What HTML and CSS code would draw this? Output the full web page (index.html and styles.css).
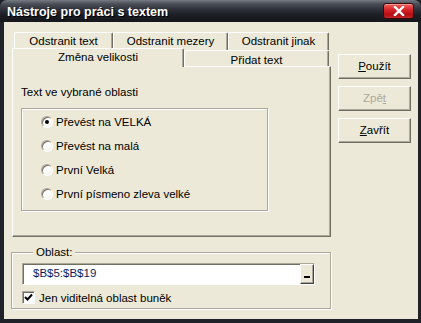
FILE: index.html
```html
<!DOCTYPE html>
<html lang="cs">
<head>
<meta charset="utf-8">
<title>Nástroje pro práci s textem</title>
<link rel="stylesheet" href="styles.css">
</head>
<body>
<div class="window">
  <div class="titlebar">
    <span class="title">Nástroje pro práci s textem</span>
    <span class="close">
      <svg width="12" height="10" viewBox="0 0 12 10"><path d="M2 1 L10 9 M10 1 L2 9" stroke="#fff" stroke-width="2.4" stroke-linecap="square" fill="none"/></svg>
    </span>
  </div>
  <div class="client">
    <div class="leftcol">
      <div class="tabctl">
        <div class="tabrow back">
          <div class="tab w1">Odstranit text</div>
          <div class="tab w2">Odstranit mezery</div>
          <div class="tab w3">Odstranit jinak</div>
        </div>
        <div class="tabrow front">
          <div class="tab sel">Změna velikosti</div>
          <div class="tab w5">Přidat text</div>
        </div>
        <div class="panel">
          <div class="caption">Text ve vybrané oblasti</div>
          <div class="radiobox">
            <div class="radio"><span class="dot on"></span>Převést na VELKÁ</div>
            <div class="radio"><span class="dot"></span>Převést na malá</div>
            <div class="radio"><span class="dot"></span>První Velká</div>
            <div class="radio"><span class="dot"></span>První písmeno zleva velké</div>
          </div>
        </div>
      </div>
      <fieldset class="group">
        <legend>Oblast:</legend>
        <div class="input">
          <span class="value">$B$5:$B$19</span>
          <span class="pick"><span class="bar"></span></span>
        </div>
        <div class="check">
          <span class="box">
            <svg width="9" height="9" viewBox="0 0 9 9"><path d="M1 4 L3.5 6.5 L8 1.5" stroke="#000" stroke-width="2" fill="none"/></svg>
          </span>Jen viditelná oblast buněk
        </div>
      </fieldset>
    </div>
    <div class="buttons">
      <div class="btn"><u>P</u>oužít</div>
      <div class="btn disabled">Zpě<u>t</u></div>
      <div class="btn"><u>Z</u>avřít</div>
    </div>
  </div>
</div>
</body>
</html>
```

FILE: styles.css
```css
* { box-sizing: border-box; }
html, body { margin: 0; padding: 0; background: #1e2128; }
body { width: 421px; height: 323px; overflow: hidden; }

.window {
  width: 421px;
  height: 323px;
  background: #1f2229;
  border-radius: 7px 7px 0 0;
  display: flex;
  flex-direction: column;
  font-family: "Liberation Sans", Arial, sans-serif;
  font-size: 11.5px;
  color: #000;
}

.titlebar {
  height: 22px;
  flex: none;
  display: flex;
  align-items: flex-start;
  justify-content: space-between;
  padding: 0 7px 0 7px;
  border-radius: 7px 7px 0 0;
  background: linear-gradient(#767a83 0%, #4a4e57 18%, #2c2f37 45%, #1b1d23 70%, #15171c 100%);
}
.title {
  color: #fff;
  font-weight: bold;
  font-size: 12.5px;
  line-height: 22px;
  padding-top: 1px;
  text-shadow: 1px 1px 0 #000;
}
.close {
  margin-top: 3px;
  width: 31px;
  height: 16px;
  border-radius: 3px;
  border: 1px solid #3a0a0a;
  background: linear-gradient(#f0625f 0%, #d8262a 40%, #b30f14 75%, #c4272a 100%);
  box-shadow: inset 0 1px 0 rgba(255,255,255,0.35);
  display: flex;
  align-items: center;
  justify-content: center;
}

.client {
  flex: 1;
  margin: 0 3px 4px 4px;
  background: #ece9d8;
  display: flex;
  padding: 10px 7px 0 8px;
}

.leftcol { width: 319px; display: flex; flex-direction: column; }

.tabctl { width: 319px; }
.tabrow { display: flex; }
.tabrow.back { padding-left: 2px; height: 18px; }
.tabrow.front { margin-top: -2px; height: 18px; align-items: flex-end; position: relative; z-index: 1; }

.tab {
  background: #ece9d8;
  border-top: 1px solid #fff;
  border-left: 1px solid #fff;
  border-right: 1px solid #716f64;
  box-shadow: inset -1px 0 0 #aca899;
  border-radius: 2px 2px 0 0;
  text-align: center;
  line-height: 15px;
  white-space: nowrap;
}
.back .tab { height: 18px; padding-top: 1px; }
.w1 { width: 99px; }
.w2 { width: 115px; }
.w3 { width: 101px; }
.tab.sel {
  width: 172px;
  height: 19px;
  margin-bottom: -1px;
  position: relative;
  z-index: 2;
  padding-top: 1px;
}
.w5 { width: 145px; height: 16px; line-height: 16px; padding-top: 1px; }

.panel {
  height: 171px;
  border-top: 1px solid #fff;
  border-left: 1px solid #fff;
  border-right: 1px solid #716f64;
  border-bottom: 1px solid #716f64;
  box-shadow: inset -1px -1px 0 #aca899;
  padding: 18px 0 0 8px;
}
.caption { line-height: 14px; }

.radiobox {
  margin-top: 9px;
  width: 247px;
  height: 103px;
  border: 1px solid #aca899;
  box-shadow: inset 1px 1px 0 #fff, 1px 1px 0 #fff;
  padding: 1px 0 0 19px;
}
.radio {
  height: 24px;
  display: flex;
  align-items: center;
}
.dot {
  width: 12px;
  height: 12px;
  border-radius: 50%;
  margin-right: 3px;
  background: #fff;
  border: 1px solid;
  border-color: #aca899 #fff #fff #aca899;
  box-shadow: inset 1px 1px 0 #716f64, inset -1px -1px 0 #f1efe2;
  display: flex;
  align-items: center;
  justify-content: center;
}
.dot.on::after {
  content: "";
  width: 4px;
  height: 4px;
  border-radius: 50%;
  background: #000;
}

.group {
  margin: 9px 0 0 -1px;
  width: 320px;
  height: 63px;
  border: 1px solid #aca899;
  box-shadow: inset 1px 1px 0 #fff, 1px 1px 0 #fff;
  padding: 4px 0 0 10px;
  min-width: 0;
}
.group legend {
  margin-left: 11px;
  padding: 0 3px;
  line-height: 13px;
  background: #ece9d8;
}

.input {
  width: 293px;
  height: 22px;
  background: #fff;
  border: 1px solid;
  border-color: #aca899 #fff #fff #aca899;
  box-shadow: inset 1px 1px 0 #716f64;
  display: flex;
  align-items: stretch;
  justify-content: space-between;
}
.value {
  padding-left: 10px;
  line-height: 19px;
  color: #101a5a;
}
.pick {
  width: 14px;
  background: #ece9d8;
  border-top: 1px solid #fff;
  border-left: 1px solid #fff;
  border-right: 1px solid #404040;
  border-bottom: 1px solid #404040;
  box-shadow: inset -1px -1px 0 #aca899;
  display: flex;
  align-items: flex-end;
  justify-content: center;
  padding-bottom: 5px;
}
.bar { width: 6px; height: 2px; background: #000; }

.check {
  margin-top: 6px;
  display: flex;
  align-items: center;
  height: 13px;
}
.box {
  width: 13px;
  height: 13px;
  margin-right: 4px;
  background: #fff;
  border: 1px solid;
  border-color: #aca899 #fff #fff #aca899;
  box-shadow: inset 1px 1px 0 #716f64;
  display: flex;
  align-items: center;
  justify-content: center;
}

.buttons {
  margin-left: 7px;
  padding-top: 22px;
  display: flex;
  flex-direction: column;
  gap: 7px;
}
.btn {
  width: 73px;
  height: 25px;
  border-top: 1px solid #fff;
  border-left: 1px solid #fff;
  border-right: 1px solid #716f64;
  border-bottom: 1px solid #716f64;
  box-shadow: inset -1px -1px 0 #aca899;
  text-align: center;
  line-height: 22px;
}
.btn.disabled { color: #aca899; }
```
